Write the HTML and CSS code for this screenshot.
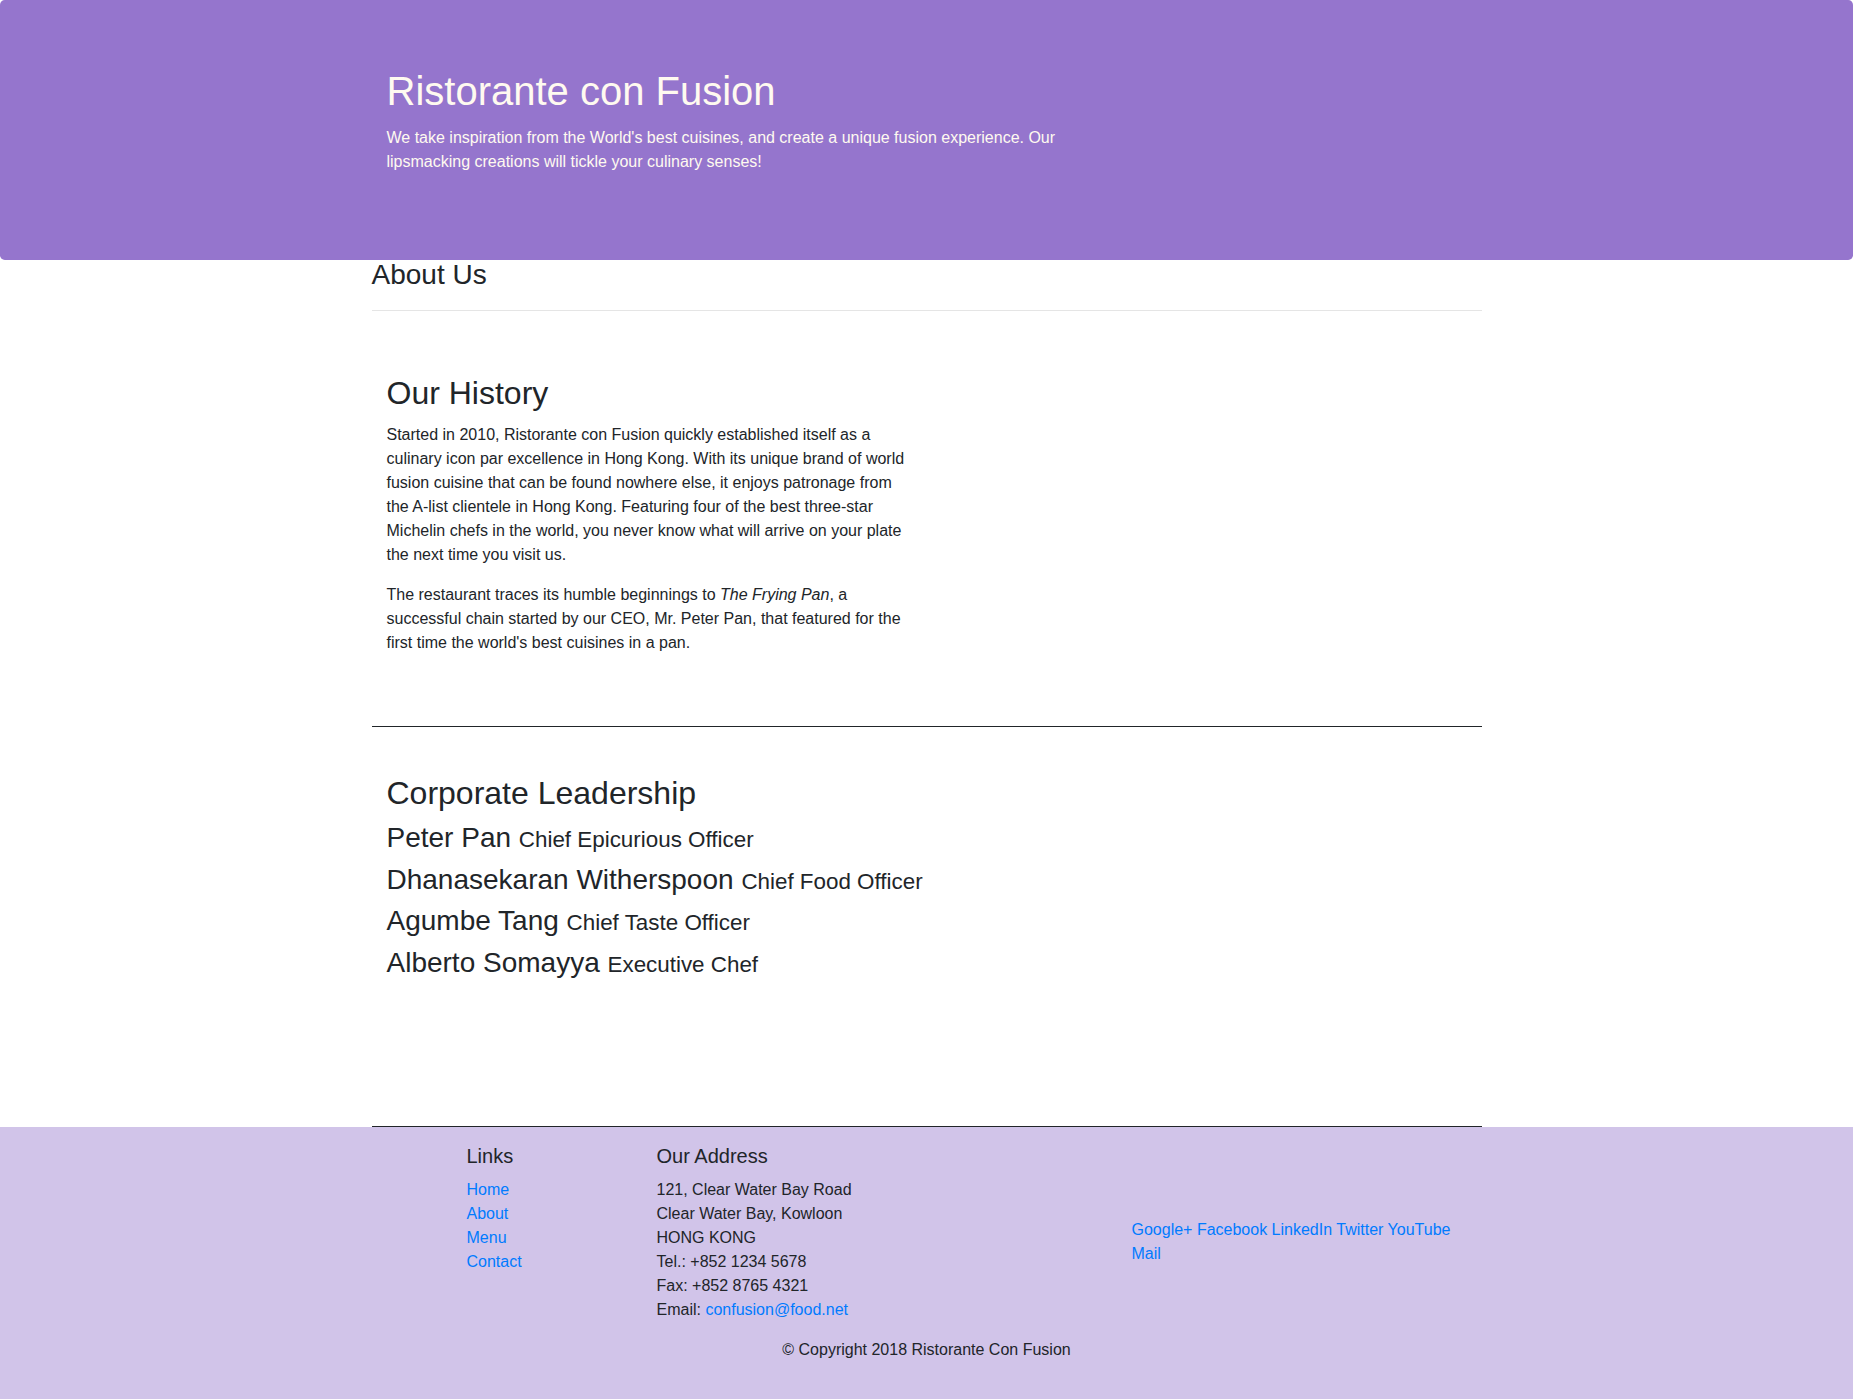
FILE: index.html
```html
<!DOCTYPE html>
<html lang="en">
<head>
<meta charset="utf-8">
<title>Ristorante con Fusion - About Us</title>
<link rel="stylesheet" href="styles.css">
</head>
<body>
<header class="jumbotron">
  <div class="container">
    <div class="row-header">
      <div class="col-intro">
        <h1>Ristorante con Fusion</h1>
        <p>We take inspiration from the World's best cuisines, and create a unique fusion experience. Our lipsmacking creations will tickle your culinary senses!</p>
      </div>
    </div>
  </div>
</header>

<main class="container">
  <div class="page-title">
    <h3>About Us</h3>
    <hr>
  </div>

  <section class="row-content">
    <div class="col-half">
      <h2>Our History</h2>
      <p>Started in 2010, Ristorante con Fusion quickly established itself as a culinary icon par excellence in Hong Kong. With its unique brand of world fusion cuisine that can be found nowhere else, it enjoys patronage from the A-list clientele in Hong Kong. Featuring four of the best three-star Michelin chefs in the world, you never know what will arrive on your plate the next time you visit us.</p>
      <p>The restaurant traces its humble beginnings to <em>The Frying Pan</em>, a successful chain started by our CEO, Mr. Peter Pan, that featured for the first time the world's best cuisines in a pan.</p>
    </div>
  </section>

  <section class="row-content">
    <div class="col-full">
      <h2>Corporate Leadership</h2>
      <ul class="media-list">
        <li class="leader">Peter Pan <small>Chief Epicurious Officer</small></li>
        <li class="leader">Dhanasekaran Witherspoon <small>Chief Food Officer</small></li>
        <li class="leader">Agumbe Tang <small>Chief Taste Officer</small></li>
        <li class="leader">Alberto Somayya <small>Executive Chef</small></li>
      </ul>
    </div>
  </section>
</main>

<footer class="footer">
  <div class="container">
    <div class="footer-row">
      <div class="col-links">
        <h5>Links</h5>
        <ul class="list-unstyled">
          <li><a href="#">Home</a></li>
          <li><a href="#">About</a></li>
          <li><a href="#">Menu</a></li>
          <li><a href="#">Contact</a></li>
        </ul>
      </div>
      <div class="col-address">
        <h5>Our Address</h5>
        <address>
          121, Clear Water Bay Road<br>
          Clear Water Bay, Kowloon<br>
          HONG KONG<br>
          Tel.: +852 1234 5678<br>
          Fax: +852 8765 4321<br>
          Email: <a href="#">confusion@food.net</a>
        </address>
      </div>
      <div class="col-social">
        <div class="social">
          <a href="#">Google+</a> <a href="#">Facebook</a> <a href="#">LinkedIn</a> <a href="#">Twitter</a> <a href="#">YouTube</a> <a href="#">Mail</a>
        </div>
      </div>
    </div>
    <div class="copyright-row">
      <p>© Copyright 2018 Ristorante Con Fusion</p>
    </div>
  </div>
</footer>
</body>
</html>
```

FILE: styles.css
```css
*, *::before, *::after {
  box-sizing: border-box;
}

html, body {
  margin: 0;
  padding: 0;
}

body {
  font-family: "Liberation Sans", Arial, sans-serif;
  font-size: 16px;
  line-height: 1.5;
  color: #212529;
  background: #fff;
}

a {
  color: #007bff;
  text-decoration: none;
}

/* headings: box height 1.2em, glyphs sit slightly high as in the reference */
h1, h2, h3, h5 {
  margin: 0 0 8px 0;
  font-weight: 400;
  line-height: 1.09;
  padding-bottom: 0.11em;
}

h1 { font-size: 40px; }
h2 {
  font-size: 32px;
  line-height: 1.03;
  padding-bottom: 0.17em;
}
h3 { font-size: 28px; }
h5 { font-size: 20px; }

p {
  margin: 0 0 16px 0;
}

.container {
  width: 1140px;
  max-width: 100%;
  margin: 0 auto;
  padding: 0 15px;
}

/* Jumbotron */
.jumbotron {
  background: #9575cd;
  color: floralwhite;
  padding: 70px 30px;
  border-radius: 4.8px;
  margin: 0;
}

.row-header {
  display: flex;
}

.col-intro {
  width: 740px;
  padding: 0 15px;
}

/* Page title */
.page-title h3 {
  margin: 0;
}

.page-title hr {
  margin: 16px 0;
  border: 0;
  border-top: 1px solid rgba(0, 0, 0, 0.1);
  height: 0;
}

/* Content rows */
.row-content {
  display: flex;
  flex-wrap: wrap;
  margin: 0 auto;
  padding: 50px 0;
  border-bottom: 1px solid #212529;
  min-height: 400px;
}

.col-half {
  width: 50%;
  padding: 0 15px;
}

.col-full {
  width: 100%;
  padding: 0 15px;
}

.media-list {
  list-style: none;
  margin: 0 0 16px 0;
  padding: 0;
}

.leader {
  font-size: 28px;
  line-height: 1.09;
  padding-bottom: 0.11em;
  margin-bottom: 8px;
}

.leader small {
  font-size: 80%;
}

/* Footer */
.footer {
  background-color: #d1c4e9;
  padding: 19px 0 21px;
}

.footer-row {
  display: flex;
  margin: 0 -15px;
}

.col-links {
  width: 190px;
  margin-left: 95px;
  padding: 0 15px;
}

.col-address {
  width: 475px;
  padding: 0 15px;
}

.col-social {
  width: 380px;
  padding: 0 15px;
  align-self: center;
}

.list-unstyled {
  list-style: none;
  margin: 0 0 16px 0;
  padding: 0;
}

address {
  font-style: normal;
  margin: 0 0 16px 0;
}

.copyright-row {
  display: flex;
  justify-content: center;
}
```
